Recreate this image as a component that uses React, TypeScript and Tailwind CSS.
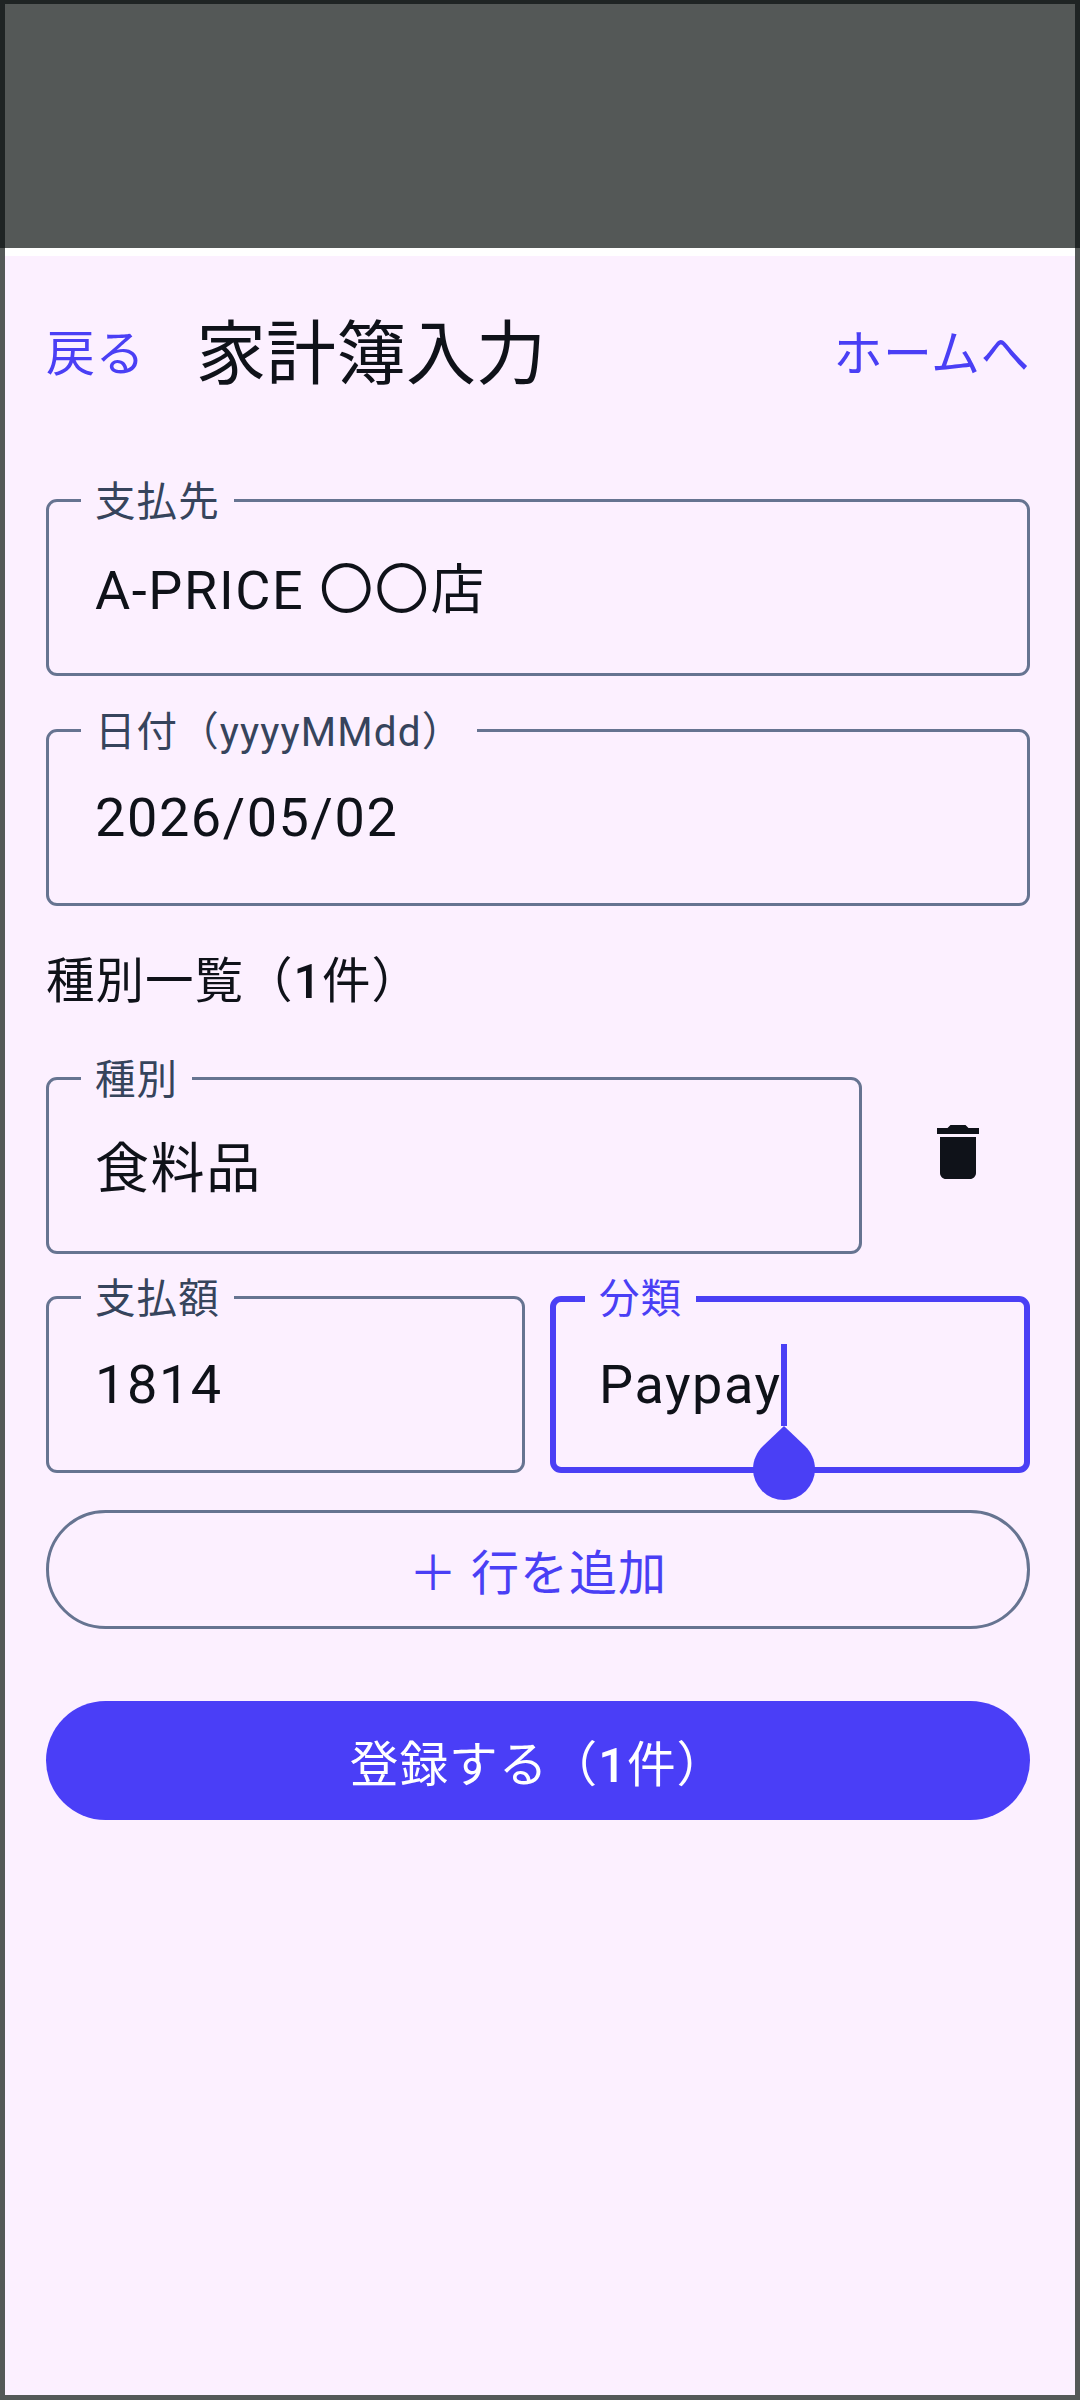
const FONT = "font-['Roboto','Noto_Sans_CJK_JP',sans-serif]";

function Field({ label, value, className = "", focused = false, valueClass = "", children }: { label: string; value: string; className?: string; focused?: boolean; valueClass?: string; children?: React.ReactNode }) {
  return (
    <div className={`relative h-[177px] rounded-[11px] flex items-center ${focused ? "border-[6px] border-[#4a3ff5] pl-[43px]" : "border-[3px] border-[#667491] pl-[46px]"} ${className}`}>
      <span className={`absolute ${focused ? "left-[29px] top-[-24px] text-[#4a3ff5]" : "left-[32px] top-[-21px] text-[#36445c]"} bg-[#fcf0ff] pl-[14px] pr-[14px] text-[40.5px] leading-[42px] tracking-[1.1px]`}>
        {label}
      </span>
      <span className={`text-[54px] leading-[60px] tracking-[1.6px] text-[#0f1219] ${valueClass}`}>{value}</span>
      {children}
    </div>
  );
}

export default function App() {
  return (
    <div className={`h-[2400px] w-[1080px] bg-[#545857] flex flex-col ${FONT}`}>
      <div className="h-[248px] shrink-0 bg-[#545857] border-t-[4px] border-x-[5px] border-[#1f2424]" />
      <div className="mx-[5px] mb-[5px] flex-1 bg-[#fcf0ff] border-t-[8px] border-white pl-[41px] pr-[45px] flex flex-col">
        <header className="mt-[62px] h-[72px] flex items-center">
          <span className="text-[49px] leading-[60px] tracking-[0.5px] text-[#4a3ff5] mt-[2px]">戻る</span>
          <h1 className="ml-[51px] text-[70px] font-normal leading-[72px] text-[#0f1219] mt-[2px]">家計簿入力</h1>
          <span className="ml-auto text-[49px] leading-[60px] tracking-[0.5px] text-[#4a3ff5] mt-[2px]">ホームへ</span>
        </header>

        <Field className="mt-[109px]" valueClass="mt-[7px]" label="支払先" value="A-PRICE 〇〇店" />
        <Field className="mt-[53px]" label="日付（yyyyMMdd）" value="2026/05/02" />

        <div className="mt-[46px] h-[60px] text-[48.5px] leading-[60px] tracking-[1px] text-[#0f1219]">
          種別一覧（<span className="font-medium">1</span>件）
        </div>

        <div className="mt-[65px] flex items-start">
          <Field className="w-[816px]" valueClass="mt-[9px]" label="種別" value="食料品" />
          <svg className="ml-[60px] mt-[39px] w-[72px] h-[72px]" viewBox="0 0 24 24" fill="#0f1219">
            <path d="M6 19c0 1.1.9 2 2 2h8c1.1 0 2-.9 2-2V7H6v12zM19 4h-3.5l-1-1h-5l-1 1H5v2h14V4z" />
          </svg>
        </div>

        <div className="mt-[42px] flex gap-[25px]">
          <Field className="w-[479px]" label="支払額" value="1814" />
          <Field className="w-[480px]" focused label="分類" value="Paypay">
            <span className="absolute left-[225px] top-[42px] h-[82px] w-[6px] bg-[#4a3ff5]" />
            <svg className="absolute left-[197px] top-[124px] w-[62px] h-[74px]" viewBox="0 0 62 74" fill="#4a3ff5">
              <path d="M31 0 L52 20 C58 26 62 34 62 43 A31 31 0 1 1 0 43 C0 34 4 26 10 20 Z" />
            </svg>
          </Field>
        </div>

        <button className="mt-[37px] h-[119px] rounded-full border-[3px] border-[#667491] bg-transparent flex items-center justify-center pt-[8px] text-[48px] tracking-[1px] text-[#4a3ff5]">
          ＋ 行を追加
        </button>
        <button className="mt-[72px] h-[119px] rounded-full bg-[#4a3ef7] flex items-center justify-center pt-[10px] text-[48.7px] tracking-[1px] text-white">
          登録する（<span className="font-medium">1</span>件）
        </button>
      </div>
    </div>
  );
}
